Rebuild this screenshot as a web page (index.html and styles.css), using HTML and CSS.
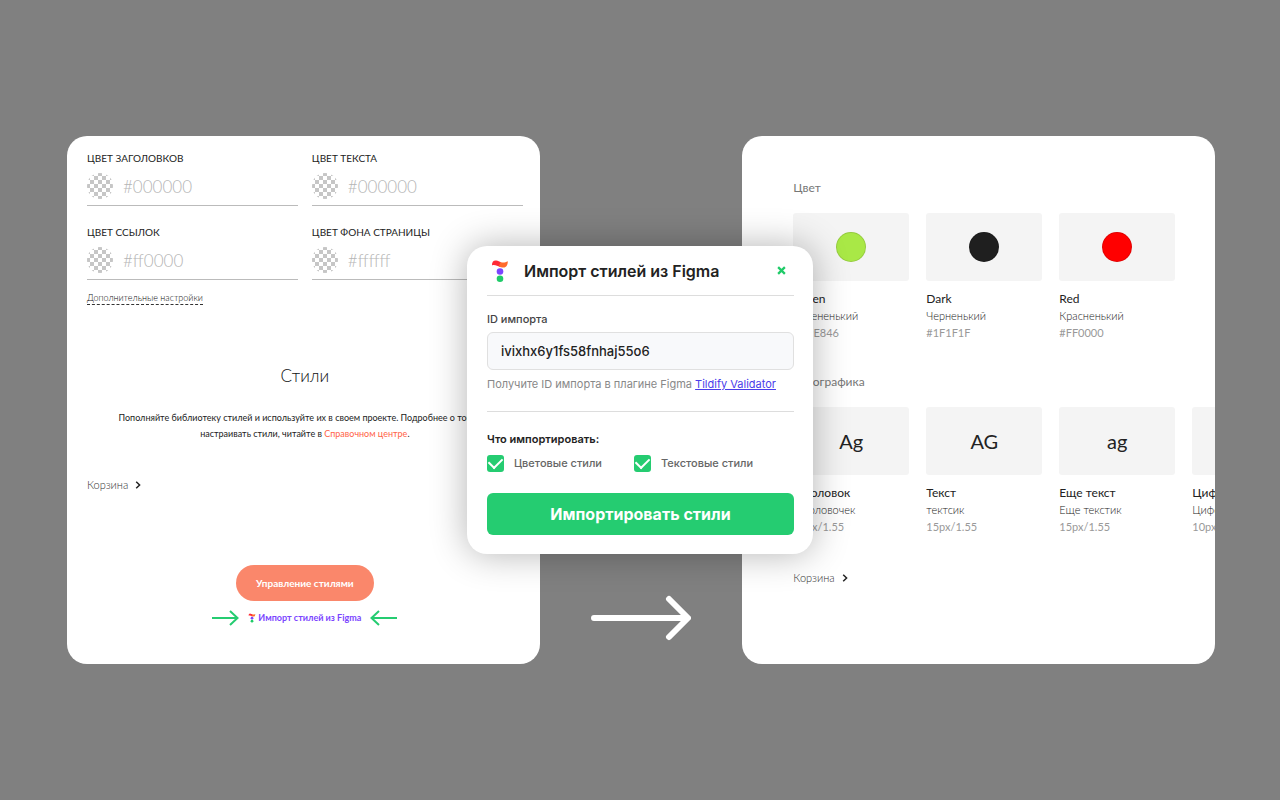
FILE: index.html
```html
<!DOCTYPE html>
<html lang="ru">
<head>
<meta charset="utf-8">
<meta name="viewport" content="width=device-width, initial-scale=1">
<title>Импорт стилей из Figma</title>
<link rel="stylesheet" href="styles.css">
</head>
<body>
<svg class="sprite" aria-hidden="true">
  <symbol id="logo" viewBox="0 0 18 24">
    <path d="M1 6.500C.7 3 2.500 1.200 5.200 1.500 7 1.700 8.500 2.600 10 3.200L9 8C6.500 7.200 3.500 5.200 1 6.500z" fill="#ff2a36"/>
    <path d="M9.500 3C12 4 14 3.700 16.800 2.300 16.800 6 15.500 8.600 12.500 8.600 10.500 8.600 9.500 8.100 7.800 7.500z" fill="#ff6a2b"/>
    <circle cx="9" cy="12.500" r="3.300" fill="#7b45ff"/>
    <circle cx="9" cy="19.700" r="3.300" fill="#1fcb68"/>
  </symbol>
  <symbol id="chevron" viewBox="0 0 6 8">
    <path d="M1.200 .8 4.600 4 1.200 7.200" fill="none" stroke="#222" stroke-width="1.500"/>
  </symbol>
  <symbol id="hint" viewBox="0 0 28 16">
    <path d="M0 8H25.500M18 1l7.500 7-7.500 7" fill="none" stroke="#25cc71" stroke-width="2"/>
  </symbol>
</svg>
<div class="scene">
  <section class="panel settings">
    <div class="fields">
      <div class="field"><label for="c1">ЦВЕТ ЗАГОЛОВКОВ</label><div class="entry"><span class="checker"></span><input id="c1" type="text" placeholder="#000000"></div></div>
      <div class="field"><label for="c2">ЦВЕТ ТЕКСТА</label><div class="entry"><span class="checker"></span><input id="c2" type="text" placeholder="#000000"></div></div>
      <div class="field"><label for="c3">ЦВЕТ ССЫЛОК</label><div class="entry"><span class="checker"></span><input id="c3" type="text" placeholder="#ff0000"></div></div>
      <div class="field"><label for="c4">ЦВЕТ ФОНА СТРАНИЦЫ</label><div class="entry"><span class="checker"></span><input id="c4" type="text" placeholder="#ffffff"></div></div>
    </div>
    <a class="more" href="#">Дополнительные настройки</a>
    <div class="intro">
      <h2>Стили</h2>
      <p>Пополняйте библиотеку стилей и используйте их в своем проекте. Подробнее о том, как<br>настраивать стили, читайте в <a href="#">Справочном центре</a>.</p>
    </div>
    <a class="trash" href="#">Корзина <svg><use href="#chevron"/></svg></a>
    <div class="actions">
      <button class="manage" type="button">Управление стилями</button>
      <div class="import-row">
        <svg class="hint"><use href="#hint"/></svg>
        <a href="#"><svg class="mini"><use href="#logo"/></svg>Импорт стилей из Figma</a>
        <svg class="hint back"><use href="#hint"/></svg>
      </div>
    </div>
  </section>

  <svg class="next" viewBox="0 0 100 46" aria-hidden="true"><path d="M3 23H96M78 4l19 19-19 19" fill="none" stroke="#fff" stroke-width="6" stroke-linecap="round" stroke-linejoin="round"/></svg>

  <section class="panel library">
    <h3>Цвет</h3>
    <div class="cards">
      <article><div class="tile"><span class="dot green"></span></div><h4>Green</h4><p>Зелененький</p><small>#A9E846</small></article>
      <article><div class="tile"><span class="dot dark"></span></div><h4>Dark</h4><p>Черненький</p><small>#1F1F1F</small></article>
      <article><div class="tile"><span class="dot red"></span></div><h4>Red</h4><p>Красненький</p><small>#FF0000</small></article>
    </div>
    <h3>Типографика</h3>
    <div class="cards">
      <article><div class="tile">Ag</div><h4>Заголовок</h4><p>Заголовочек</p><small>20px/1.55</small></article>
      <article><div class="tile">AG</div><h4>Текст</h4><p>тектсик</p><small>15px/1.55</small></article>
      <article><div class="tile">ag</div><h4>Еще текст</h4><p>Еще текстик</p><small>15px/1.55</small></article>
      <article><div class="tile"></div><h4>Цифры</h4><p>Циферки</p><small>10px/1.55</small></article>
    </div>
    <a class="trash" href="#">Корзина <svg><use href="#chevron"/></svg></a>
  </section>

  <form class="modal" role="dialog" aria-labelledby="title">
    <header>
      <svg class="logo"><use href="#logo"/></svg>
      <h1 id="title">Импорт стилей из Figma</h1>
      <button class="close" type="button" aria-label="Закрыть"><svg viewBox="0 0 8 8"><path d="M1 1l6 6M7 1L1 7" stroke="#1fcb68" stroke-width="2"/></svg></button>
    </header>
    <div class="import-id">
      <label for="iid">ID импорта</label>
      <input id="iid" type="text" value="ivixhx6y1fs58fnhaj55o6">
      <p>Получите ID импорта в плагине Figma <a href="#">Tildify Validator</a></p>
    </div>
    <fieldset>
      <legend>Что импортировать:</legend>
      <div class="checks">
        <label><input type="checkbox" checked>Цветовые стили</label>
        <label><input type="checkbox" checked>Текстовые стили</label>
      </div>
    </fieldset>
    <button class="submit" type="submit">Импортировать стили</button>
  </form>
</div>
</body>
</html>
```
FILE: styles.css
```css
* { box-sizing: border-box; }
body, h1, h2, h3, h4, p, fieldset { margin: 0; }
body {
  background: #808080;
  font-family: Lato, "Open Sans", sans-serif;
  color: #222;
}
input, button { font-family: inherit; }
.sprite { display: none; }

.scene {
  position: relative;
  min-height: 100vh;
  padding: 0 65px 0 67px;
  display: grid;
  grid-template-columns: minmax(0, 7fr) minmax(0, 3fr) minmax(0, 7fr);
  align-content: center;
}
.panel {
  background: #fff;
  border-radius: 20px;
  overflow: hidden;
}

/* Page settings */
.settings { padding: 14px 17px 38px 20px; }
.fields {
  display: grid;
  grid-template-columns: 1fr 1fr;
  gap: 18px 14px;
}
.field label {
  display: block;
  font-size: 10px;
  line-height: 16px;
}
.entry {
  display: flex;
  align-items: center;
  gap: 10px;
  height: 40px;
  padding-top: 1px;
  border-bottom: 1px solid #bbb;
}
.checker {
  flex: none;
  width: 26px;
  height: 26px;
  border-radius: 50%;
  background: repeating-conic-gradient(#c6c6c6 0 25%, #fff 0 50%) 3px 3px / 8px 8px;
}
.entry input {
  width: 100%;
  min-width: 0;
  padding: 0;
  border: 0;
  outline: 0;
  background: none;
  font-size: 17px;
  font-weight: 300;
}
.entry input::placeholder { color: #b5b5b5; }
.more {
  display: inline-block;
  margin-top: 11px;
  border-bottom: 1px dashed #333;
  color: #111;
  font-size: 9px;
  font-weight: 300;
  line-height: 13px;
  text-decoration: none;
}
.intro {
  margin-top: 59px;
  text-align: center;
}
.intro h2 {
  color: #111;
  font-size: 17px;
  font-weight: 300;
  line-height: 24px;
}
.intro p {
  margin-top: 22px;
  font-size: 9px;
  line-height: 16px;
  white-space: nowrap;
}
.intro a { color: #ff6347; text-decoration: none; }
.trash {
  display: flex;
  align-items: center;
  gap: 7px;
  color: #333;
  font-size: 11px;
  font-weight: 300;
  line-height: 16px;
  text-decoration: none;
}
.trash svg { width: 6px; height: 8px; }
.settings .trash { margin-top: 35px; }
.actions {
  display: flex;
  flex-direction: column;
  align-items: center;
  margin-top: 72px;
}
.manage {
  height: 36px;
  padding: 0 20px;
  border: 0;
  border-radius: 18px;
  background: #fa876b;
  color: #fff;
  font-size: 10px;
  font-weight: 700;
}
.import-row {
  display: flex;
  align-items: center;
  gap: 8px;
  margin-top: 9px;
}
.import-row a {
  display: flex;
  align-items: center;
  gap: 2px;
  color: #7b45ff;
  font-size: 9px;
  font-weight: 700;
  line-height: 16px;
  text-decoration: none;
}
.mini { width: 8px; height: 10px; }
.hint { width: 28px; height: 16px; }
.back { transform: scaleX(-1); }

.next {
  width: 100px;
  height: 46px;
  align-self: end;
  justify-self: center;
  margin-bottom: 23px;
}

/* Style library */
.library { padding: 43px 0 0 51px; }
.library h3 {
  color: #777;
  font-size: 12px;
  font-weight: 400;
  line-height: 18px;
}
.cards {
  display: grid;
  grid-template-columns: repeat(3, 116px);
  grid-auto-flow: column;
  grid-auto-columns: 116px;
  gap: 17px;
  margin: 16px 0 31px;
}
.tile {
  display: flex;
  align-items: center;
  justify-content: center;
  height: 68px;
  margin-bottom: 9px;
  border-radius: 3px;
  background: #f4f4f4;
  font-size: 20px;
}
.dot {
  width: 30px;
  height: 30px;
  border: 1px solid rgba(0, 0, 0, .12);
  border-radius: 50%;
}
.green { background: #a9e846; }
.dark { background: #1f1f1f; }
.red { background: #f00; }
.cards h4 {
  font-size: 12px;
  font-weight: 400;
  line-height: 17px;
}
.cards p {
  color: #222;
  font-size: 11px;
  font-weight: 300;
  line-height: 17px;
}
.cards small {
  display: block;
  color: #999;
  font-size: 11px;
  line-height: 18px;
}
.library .trash { margin-top: 34px; }

/* Import dialog */
.modal {
  position: absolute;
  top: 50%;
  left: 50%;
  transform: translate(-50%, -50%);
  width: min(346px, 100%);
  padding: 0 19px 19px 20px;
  border-radius: 20px;
  background: #fff;
  box-shadow: 0 0 36px rgba(0, 0, 0, .3);
  font-family: Inter, sans-serif;
}
.modal header {
  display: flex;
  align-items: center;
  height: 50px;
  padding: 0 8px 0 4px;
  border-bottom: 1px solid #ddd;
}
.logo { width: 18px; height: 24px; }
.modal h1 {
  flex: 1;
  margin-left: 15px;
  font-size: 16px;
  font-weight: 600;
  white-space: nowrap;
}
.close {
  display: flex;
  padding: 0;
  border: 0;
  background: none;
}
.close svg { width: 9px; height: 9px; }
.import-id {
  padding: 14px 0 19px;
  border-bottom: 1px solid #ddd;
}
.import-id label {
  display: block;
  color: #444;
  font-size: 11px;
  font-weight: 500;
  line-height: 18px;
}
.import-id input {
  width: 100%;
  height: 38px;
  margin-top: 4px;
  padding: 0 13px;
  border: 1px solid #e0e0e0;
  border-radius: 6px;
  outline: 0;
  background: #f8f9fb;
  color: #222;
  font-size: 13px;
  font-weight: 500;
}
.import-id p {
  margin-top: 6px;
  color: #888;
  font-size: 11px;
  line-height: 16px;
  white-space: nowrap;
}
.import-id a { color: #4a3dea; }
.modal fieldset {
  padding: 19px 0 21px;
  border: 0;
}
.modal legend {
  float: left;
  width: 100%;
  padding: 0;
  font-size: 11px;
  font-weight: 600;
  line-height: 16px;
}
.checks {
  clear: both;
  display: flex;
  gap: 32px;
  padding-top: 8px;
}
.checks label {
  display: flex;
  align-items: center;
  gap: 10px;
  color: #666;
  font-size: 11px;
  font-weight: 500;
  line-height: 17px;
}
.checks input {
  display: flex;
  align-items: center;
  justify-content: center;
  width: 17px;
  height: 17px;
  margin: 0;
  border-radius: 3px;
  background: #25cc71;
  appearance: none;
}
.checks input:checked::before {
  content: "";
  flex: none;
  width: 7px;
  height: 11px;
  margin-bottom: 4px;
  border: solid #fff;
  border-width: 0 2px 2px 0;
  transform: rotate(45deg);
}
.submit {
  display: block;
  width: 100%;
  height: 42px;
  border: 0;
  border-radius: 6px;
  background: #25cc71;
  color: #fff;
  font-size: 16px;
  font-weight: 700;
}
```
